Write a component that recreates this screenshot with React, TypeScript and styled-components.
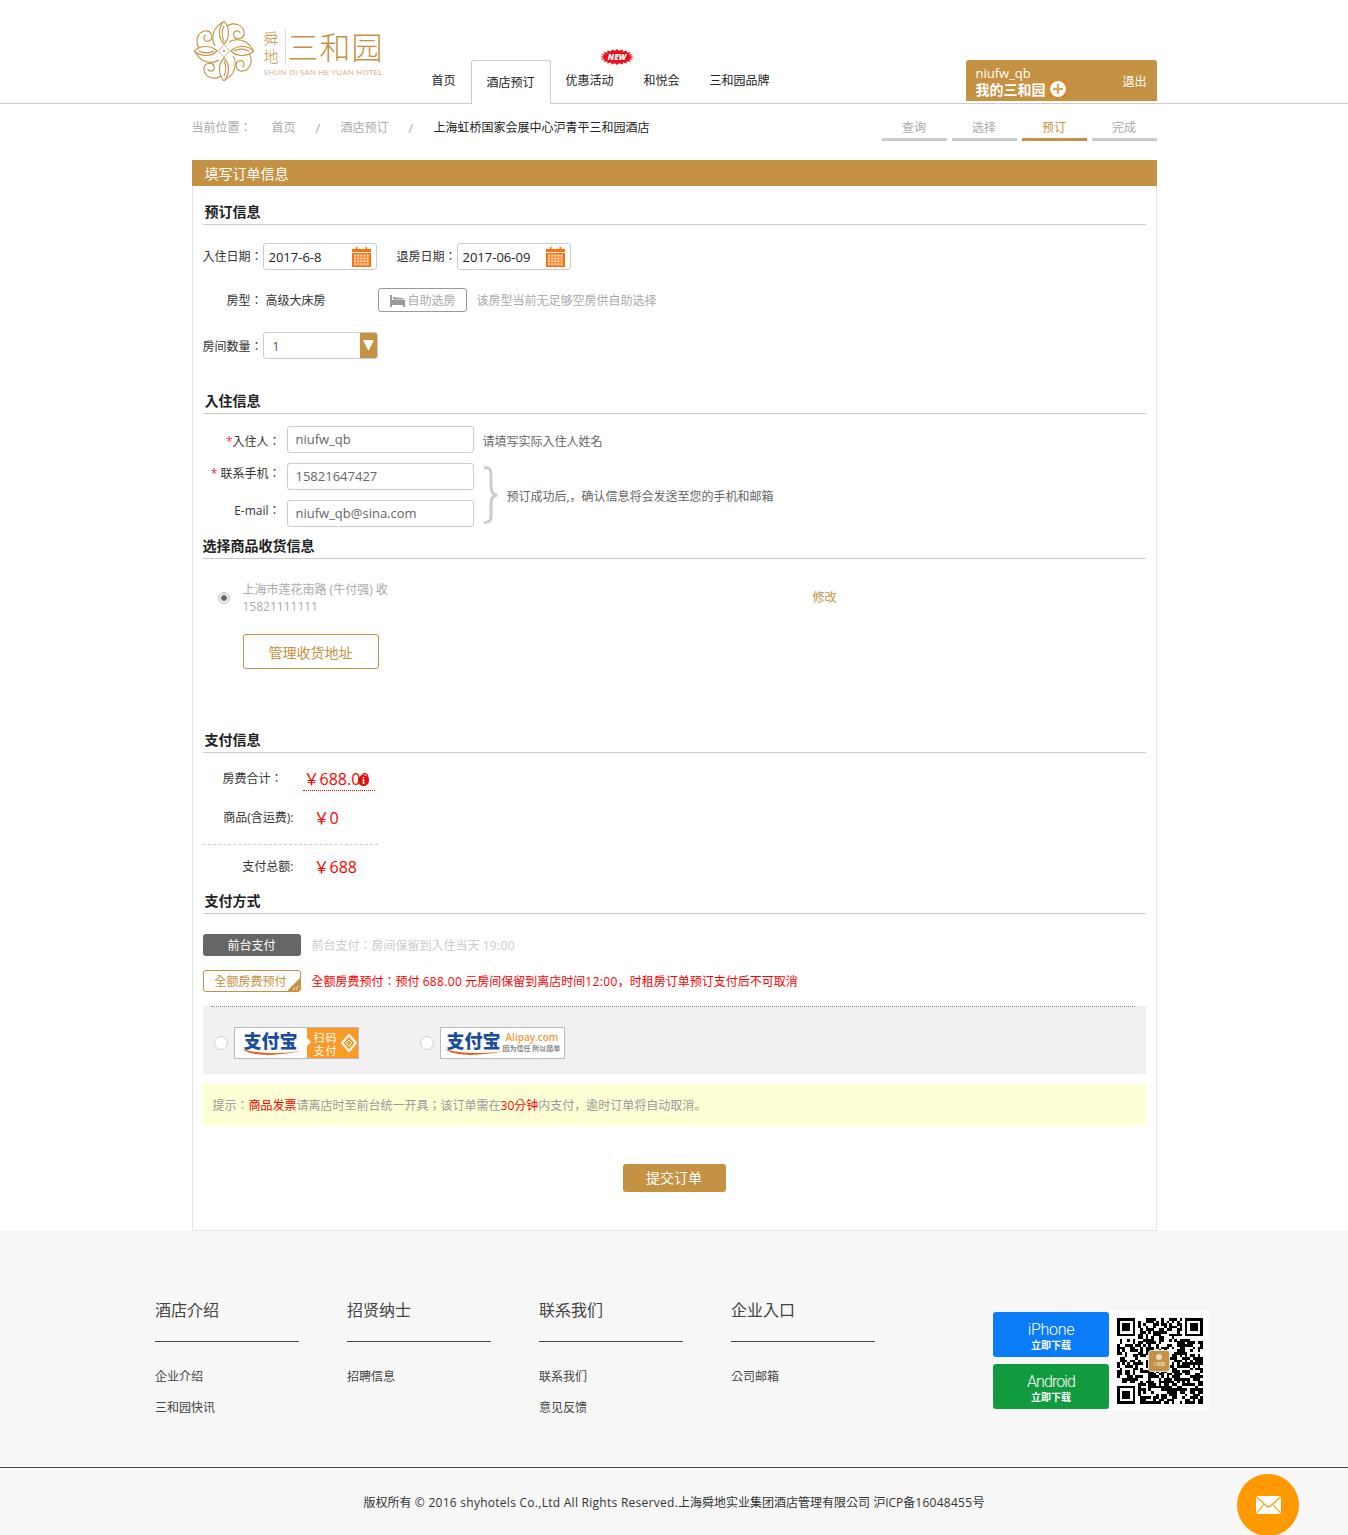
import React from "react";
import styled, { createGlobalStyle, css } from "styled-components";

const TAN = "#c59143";
const Global = createGlobalStyle`
  html, body { margin: 0; padding: 0; background: #fff; }
  body { font-family: "Open Sans", "Noto Sans CJK KR", "Noto Sans CJK SC", sans-serif; font-size: 12px; color: #333; line-height: 20px; overflow-x: hidden; }
  * { box-sizing: border-box; }
`;
const shift = (n?: number) => (n ? (n > 0 ? css`padding-top: ${n * 2}px;` : css`padding-bottom: ${-n * 2}px;`) : "");

const Page = styled.div`position: relative; width: 1348px; height: 1535px; overflow: hidden;`;

const Header = styled.header`height: 104px; border-bottom: 1px solid #ccc;`;
const HeaderInner = styled.div`width: 965px; margin: 0 auto; display: flex; height: 104px;`;
const LogoBox = styled.div`width: 225px; padding: 21px 0 0 2px; display: flex; align-items: flex-start;`;
const LogoWords = styled.div`margin: 8px 0 0 10px;`;
const LogoTop = styled.div`display: flex; height: 37px;`;
const LogoSide = styled.div`width: 15px; font-size: 15px; line-height: 18px; color: ${TAN}; font-weight: 300;`;
const LogoRule = styled.div`width: 1px; height: 36px; margin: 0 2px 0 6px; background: #ead9bd;`;
const LogoCn = styled.div`font-size: 31px; line-height: 36px; font-weight: 300; color: ${TAN}; letter-spacing: 1px; white-space: nowrap;`;
const LogoEn = styled.div`font-size: 8px; line-height: 12px; letter-spacing: 0.25px; color: #d3ae78; white-space: nowrap;`;
const Nav = styled.nav`display: flex; align-items: flex-start; padding-top: 60px;`;
const NavItem = styled.a`position: relative; display: block; padding: 1px 15px 0; height: 40px; line-height: 40px; color: #222; white-space: nowrap;`;
const NavActive = styled.a`display: block; width: 80px; height: 44px; line-height: 44px; text-align: center; border: 1px solid #ccc; border-bottom: 0; border-radius: 3px 3px 0 0; background: #fff; color: #222;`;
const NewBadge = styled.svg`position: absolute; left: 49px; top: -11px;`;
const UserBox = styled.div`margin-left: auto; margin-top: 60px; width: 191px; height: 41px; background: ${TAN}; border-radius: 3px 3px 0 0; padding: 2px 10px 0; color: #fff; display: flex; justify-content: space-between; align-items: center;`;
const UserName = styled.div`font-size: 13px; line-height: 15px;`;
const UserHome = styled.div`display: flex; align-items: center; gap: 4px; font-size: 14px; line-height: 17px; font-weight: 700;`;
const Plus = styled.svg`display: block;`;

const Crumbs = styled.div`width: 965px; height: 56px; margin: 0 auto; display: flex; justify-content: space-between; padding-top: 14px;`;
const CrumbList = styled.div`display: flex; gap: 20px; color: #aaa;`;
const CrumbLead = styled.span`width: 60px;`;
const CrumbSep = styled.span`width: 5px; font-size: 13px;`;
const CrumbNow = styled.span`color: #222;`;
const Steps = styled.div`display: flex; gap: 5px;`;
const Step = styled.div<{ $on?: boolean }>`width: 65px; text-align: center; height: 23px; color: ${p => (p.$on ? TAN : "#aaa")}; border-bottom: 3px solid ${p => (p.$on ? TAN : "#ccc")};`;

const Panel = styled.main`width: 965px; margin: 0 auto;`;
const PanelHead = styled.h1`margin: 0; height: 26px; line-height: 28px; background: ${TAN}; color: #fff; font-size: 14px; font-weight: 400; padding-left: 13px;`;
const PanelBody = styled.div`display: flow-root; border: 1px solid #e4e4e4; border-top: 0; padding: 0 10px 38px;`;

const Title = styled.h2<{ $top: number; $flush?: boolean }>`margin: ${p => p.$top}px 0 0; height: 25px; line-height: 24px; font-size: 14px; font-weight: 700; color: #222; border-bottom: 1px solid #ccc; padding-left: ${p => (p.$flush ? 0 : 2)}px;`;
const Row = styled.div<{ $top: number; $h?: number }>`display: flex; align-items: center; margin-top: ${p => p.$top}px; height: ${p => p.$h ?? 27}px;`;
const Label = styled.span<{ $w: number; $ml?: number; $dy?: number }>`width: ${p => p.$w}px; margin-left: ${p => p.$ml ?? 0}px; text-align: right; white-space: nowrap; color: #333; flex: none; ${p => shift(p.$dy)}`;
const Req = styled.i`color: #e33; font-style: normal;`;
const DateBox = styled.div`width: 114px; height: 27px; border: 1px solid #ccc; border-radius: 3px; display: flex; align-items: center; justify-content: space-between; padding: 0 5px 0 5px; font-size: 13px; color: #222;`;
const Plain = styled.span<{ $ml?: number; $dy?: number }>`margin-left: ${p => p.$ml ?? 0}px; white-space: nowrap; ${p => shift(p.$dy)}`;
const GhostBtn = styled.div`margin-left: 52px; width: 89px; height: 24px; border: 1px solid #999; border-radius: 3px; color: #aaa; display: flex; align-items: center; padding: 1px 0 0 11px; gap: 3px;`;
const Hint = styled.span<{ $ml: number; $c?: string; $dy?: number }>`margin-left: ${p => p.$ml}px; color: ${p => p.$c ?? "#aaa"}; white-space: nowrap; ${p => shift(p.$dy)}`;
const Num = styled.span`letter-spacing: 0.35px;`;
const SelectBox = styled.div`margin-left: 1px; width: 115px; height: 27px; border: 1px solid #ccc; border-radius: 3px; display: flex; justify-content: space-between; overflow: hidden;`;
const SelectVal = styled.span`padding-left: 9px; line-height: 27px; color: #555;`;
const SelectArrow = styled.span`width: 17px; background: ${TAN}; display: flex; align-items: center; justify-content: center;`;

const TextField = styled.div`width: 187px; height: 27px; border: 1px solid #ccc; border-radius: 3px; padding-left: 8px; line-height: 25px; font-size: 13px; color: #666; flex: none; margin-left: 6px;`;
const BraceGroup = styled.div`display: flex; align-items: center; margin-top: 10px;`;
const BraceFields = styled.div`display: flex; flex-direction: column; gap: 10px;`;
const FieldRow = styled.div`display: flex; align-items: center; height: 27px;`;
const BraceIcon = styled.svg`margin-left: 9px; flex: none;`;

const Address = styled.div`display: flex; margin-top: 22px; padding-left: 15px; height: 34px; align-items: center;`;
const Radio = styled.span<{ $on?: boolean; $size?: number }>`width: ${p => p.$size ?? 12}px; height: ${p => p.$size ?? 12}px; flex: none; border-radius: 50%; border: 1px solid #ccc; background: ${p => (p.$on ? "radial-gradient(circle, #666 0 2.5px, #e4e4e4 3px)" : "#fff")};`;
const AddrText = styled.div`margin-left: 13px; width: 570px; color: #aaa; line-height: 17px;`;
const Edit = styled.span`color: ${TAN};`;
const ManageBtn = styled.div`margin: 19px 0 0 40px; width: 136px; height: 35px; border: 1px solid ${TAN}; border-radius: 3px; color: ${TAN}; font-size: 14px; line-height: 35px; text-align: center;`;

const PayRow = styled.div<{ $top: number }>`display: flex; align-items: center; height: 24px; margin-top: ${p => p.$top}px;`;
const Money = styled.span<{ $dotted?: boolean; $ml: number }>`position: relative; margin-left: ${p => p.$ml}px; font-size: 16px; line-height: 24px; height: 24px; color: #f00; white-space: nowrap; ${p => p.$dotted && `width: 72px; padding-left: 1px; border-bottom: 1px dotted #f00;`}`;
const InfoDot = styled.svg`position: absolute; left: 55px; top: 8px;`;
const Dash = styled.div`width: 175px; margin-top: 14px; border-top: 1px dashed #ccc;`;

const PayTag = styled.div<{ $outline?: boolean }>`position: relative; width: 98px; height: 22px; flex: none; border-radius: 3px; text-align: center; line-height: 23px; overflow: hidden; ${p => p.$outline ? `border: 1px solid ${TAN}; color: ${TAN}; background: #fff; padding-right: 2px; line-height: 22px;` : `background: #666; color: #fff;`}`;
const Corner = styled.svg`position: absolute; right: -1px; bottom: -1px;`;
const Alipays = styled.div`margin-top: 14px; height: 68px; background: #f1f1f1;`;
const Dotted = styled.div`margin: 0 11px 0 8px; border-top: 1px dotted #888;`;
const AlipayRow = styled.div`display: flex; align-items: center; padding: 20px 0 0 11px;`;
const AliCard = styled.div<{ $gap?: number }>`position: relative; width: 125px; height: 32px; margin-left: 6px; margin-right: ${p => p.$gap ?? 0}px; display: flex; background: #fff; border: 1px solid #bbb; overflow: hidden;`;
const AliBrand = styled.div<{ $w: number; $pl: number }>`position: relative; width: ${p => p.$w}px; padding-left: ${p => p.$pl}px; font-size: 18px; line-height: 26px; font-weight: 900; color: #1c4c9c; white-space: nowrap; flex: none;`;
const Swoosh = styled.svg<{ $left: number }>`position: absolute; left: ${p => p.$left}px; top: 19px;`;
const AliScan = styled.div`position: relative; flex: 1; background: #fb9a26; color: #fff; font-size: 11px; letter-spacing: 1px; line-height: 13px; padding: 3px 0 0 7px; &::before { content: ""; position: absolute; left: 0; top: 10px; border: 4px solid transparent; border-left-color: #fff; }`;
const Diamond = styled.svg`position: absolute; right: 0; top: 0;`;
const AliSub = styled.div`flex: 1; display: flex; flex-direction: column; white-space: nowrap;`;
const AliDom = styled.span`color: #f79a3c; font-size: 10px; line-height: 12px; font-weight: 600; margin-top: 3px; margin-left: 3px;`;
const AliNote = styled.span`color: #888; font-size: 7px; line-height: 11px; font-weight: 700;`;
const Tip = styled.div`margin-top: 10px; height: 42px; line-height: 44px; background: #ffffd5; padding-left: 10px; color: #999;`;
const Red = styled.b`color: #f00; font-weight: 400;`;
const Submit = styled.div`margin: 38px auto 0; width: 103px; height: 28px; line-height: 28px; border-radius: 3px; text-align: center; background: ${TAN}; color: #fff; font-size: 14px;`;

const Footer = styled.footer`background: #f7f7f7; height: 304px;`;
const FooterMain = styled.div`height: 236px; display: flex; padding-left: 155px;`;
const FootCol = styled.div`width: 144px; margin-right: 48px; padding-top: 68px; flex: none;`;
const FootTitle = styled.div`height: 43px; line-height: 22px; font-size: 16px; color: #444; border-bottom: 1px solid #444;`;
const FootLinks = styled.div`margin-top: 19px; line-height: 31px; color: #444;`;
const Apps = styled.div`display: flex; margin-left: 70px; padding-top: 80px;`;
const AppCol = styled.div`display: flex; flex-direction: column; gap: 7px; padding-top: 1px;`;
const AppBtn = styled.div<{ $bg: string }>`width: 116px; height: 45px; border-radius: 3px; background: ${p => p.$bg}; color: #fff; text-align: center; padding-top: 9px;`;
const AppName = styled.div<{ $ls: number }>`font-size: 16px; line-height: 18px; font-family: Roboto, sans-serif; font-weight: 300; letter-spacing: ${p => p.$ls}px;`;
const AppSub = styled.div`font-size: 10px; line-height: 12px; font-weight: 700;`;
const Qr = styled.div`position: relative; width: 100px; height: 100px; background: #fff; padding: 7px 7px 0 8px;`;
const QrLogo = styled.div`position: absolute; left: 39px; top: 39px; width: 22px; height: 22px; background: ${TAN}; border: 1px solid #ddd; border-radius: 3px; color: #fff; font-size: 4px; line-height: 6px; text-align: center; padding-top: 11px; &::before { content: ""; position: absolute; left: 7px; top: 3px; width: 6px; height: 6px; border-radius: 50%; background: #ecd9b8; }`;
const Copy = styled.div`border-top: 1px solid #444; height: 68px; padding-top: 1px; line-height: 68px; text-align: center; color: #333; white-space: nowrap;`;
const CopyLatin = styled.span`letter-spacing: 0.27px;`;
const Mail = styled.div`position: absolute; left: 1237px; top: 1474px; width: 62px; height: 62px; border-radius: 50%; background: #ff9900; display: flex; align-items: center; justify-content: center;`;

const Calendar = () => (
  <svg width="19" height="20" viewBox="0 0 19 20">
    <rect x="0" y="2" width="19" height="18" fill="#ff6f0a" />
    <rect x="4" y="0" width="1.5" height="4" fill="#ff6f0a" />
    <rect x="13.5" y="0" width="1.5" height="4" fill="#ff6f0a" />
    <rect x="0" y="5" width="19" height="1" fill="#fff" />
    {[0, 1, 2, 3].map(r => [0, 1, 2, 3, 4].map(c => (
      <rect key={`${r}-${c}`} x={2 + c * 3.1} y={7.5 + r * 2.9} width="2.3" height="2.1" fill="#ffd9b8" />
    )))}
  </svg>
);

const Bed = () => (
  <svg width="15" height="12" viewBox="0 0 15 12">
    <path d="M0 0h2v5h13v7h-2v-2H2v2H0z" fill="#999" />
    <path d="M3 2l4 .5 7 1V4.500H3z" fill="#999" />
  </svg>
);

const star = (() => {
  const pts: string[] = [];
  const n = 20;
  for (let i = 0; i < n * 2; i++) {
    const a = (i / (n * 2)) * Math.PI * 2;
    const k = i % 2 ? 0.78 : 1;
    pts.push(`${(17 + Math.cos(a) * 17 * k).toFixed(1)},${(8 + Math.sin(a) * 8 * k).toFixed(1)}`);
  }
  return pts.join(" ");
})();

const Flower = () => (
  <svg width="60" height="60" viewBox="-30 -30 60 60" fill="none" stroke={TAN} strokeWidth="1.1">
    {[0, 90, 180, 270].map(r => (
      <g key={r} transform={`rotate(${r})`}>
        <path d="M0 -30C-6 -23 -6 -13 0 -7C6 -13 6 -23 0 -30Z" />
        <path d="M0 -25C-2.500 -20 -2.500 -15 0 -10" />
        <path d="M3 -25C9 -29 19 -27 20 -19C21 -12 12 -10 10 -15C8 -20 15 -22 16 -18" />
        <path d="M5 -9C9 -12 16 -12 22 -9C26 -6 28 -3 29 -1" />
      </g>
    ))}
    <circle r="1" fill={TAN} stroke="none" />
    <path d="M-6 0L0 -6L6 0L0 6Z" strokeWidth="0.6" />
  </svg>
);

const QrCode = () => {
  const n = 33;
  const cells: React.ReactNode[] = [];
  let s = 1234567;
  const finder = (x: number, y: number) =>
    (x < 8 && y < 8) || (x >= n - 8 && y < 8) || (x < 8 && y >= n - 8);
  for (let y = 0; y < n; y++) for (let x = 0; x < n; x++) {
    s = (s * 1103515245 + 12345) & 0x7fffffff;
    if (!finder(x, y) && (s >> 16) % 100 < 55) cells.push(<rect key={`${x}-${y}`} x={x} y={y} width="1.02" height="1.02" />);
  }
  const eye = (x: number, y: number) => (
    <g key={`e${x}${y}`}>
      <path d={`M${x} ${y}h7v7h-7zM${x + 1} ${y + 1}v5h5v-5z`} fillRule="evenodd" />
      <rect x={x + 2} y={y + 2} width="3" height="3" />
    </g>
  );
  return (
    <svg width="86" height="86" viewBox="0 0 33 33" fill="#000" shapeRendering="crispEdges">
      {cells}
      {eye(0, 0)}{eye(n - 7, 0)}{eye(0, n - 7)}
    </svg>
  );
};

const AliLogo = ({ w, pl }: { w: number; pl: number }) => (
  <AliBrand $w={w} $pl={pl}>
    支付宝
    <Swoosh $left={pl - 2} width="62" height="9" viewBox="0 0 62 9">
      <path d="M0 2C10 10 36 9 60 4C40 7 14 7 0 2Z" fill="#e8601c" />
    </Swoosh>
  </AliBrand>
);

export default function App() {
  return (
    <Page>
      <Global />
      <Header>
        <HeaderInner>
          <LogoBox>
            <Flower />
            <LogoWords>
              <LogoTop>
                <LogoSide>舜地</LogoSide>
                <LogoRule />
                <LogoCn>三和园</LogoCn>
              </LogoTop>
              <LogoEn>SHUN DI·SAN HE YUAN HOTEL</LogoEn>
            </LogoWords>
          </LogoBox>
          <Nav>
            <NavItem>首页</NavItem>
            <NavActive>酒店预订</NavActive>
            <NavItem>
              优惠活动
              <NewBadge width="34" height="16" viewBox="0 0 34 16">
                <polygon points={star} fill="#e8101c" />
                <text x="17" y="11" textAnchor="middle" fontSize="8" fontWeight="800" fontStyle="italic" fill="#fff" fontFamily="Open Sans">NEW</text>
              </NewBadge>
            </NavItem>
            <NavItem>和悦会</NavItem>
            <NavItem>三和园品牌</NavItem>
          </Nav>
          <UserBox>
            <div>
              <UserName>niufw_qb</UserName>
              <UserHome>
                我的三和园
                <Plus width="16" height="16" viewBox="0 0 16 16">
                  <rect width="16" height="16" fill="#e8730f" />
                  <circle cx="8" cy="8" r="8" fill="#fff" />
                  <path d="M8 3v10M3 8h10" stroke="#e8a050" strokeWidth="2.200" />
                </Plus>
              </UserHome>
            </div>
            <span>退出</span>
          </UserBox>
        </HeaderInner>
      </Header>

      <Crumbs>
        <CrumbList>
          <CrumbLead>当前位置：</CrumbLead>
          <span>首页</span>
          <CrumbSep>/</CrumbSep>
          <span>酒店预订</span>
          <CrumbSep>/</CrumbSep>
          <CrumbNow>上海虹桥国家会展中心沪青平三和园酒店</CrumbNow>
        </CrumbList>
        <Steps>
          <Step>查询</Step>
          <Step>选择</Step>
          <Step $on>预订</Step>
          <Step>完成</Step>
        </Steps>
      </Crumbs>

      <Panel>
        <PanelHead>填写订单信息</PanelHead>
        <PanelBody>
          <Title $top={14}>预订信息</Title>
          <Row $top={18}>
            <Label $w={60}>入住日期：</Label>
            <DateBox>2017-6-8<Calendar /></DateBox>
            <Label $w={60} $ml={20}>退房日期：</Label>
            <DateBox>2017-06-09<Calendar /></DateBox>
          </Row>
          <Row $top={18} $h={24}>
            <Label $w={60} $dy={1}>房型：</Label>
            <Plain $ml={3} $dy={1}>高级大床房</Plain>
            <GhostBtn><Bed />自助选房</GhostBtn>
            <Hint $ml={10} $dy={1}>该房型当前无足够空房供自助选择</Hint>
          </Row>
          <Row $top={20}>
            <Label $w={59} $dy={1}>房间数量：</Label>
            <SelectBox>
              <SelectVal>1</SelectVal>
              <SelectArrow>
                <svg width="11" height="11" viewBox="0 0 11 11"><path d="M0 0h11L5.500 11z" fill="#fff" /></svg>
              </SelectArrow>
            </SelectBox>
          </Row>

          <Title $top={30}>入住信息</Title>
          <Row $top={12}>
            <Label $w={78} $dy={2}><Req>*</Req>入住人：</Label>
            <TextField>niufw_qb</TextField>
            <Hint $ml={9} $c="#666" $dy={2}>请填写实际入住人姓名</Hint>
          </Row>
          <BraceGroup>
            <BraceFields>
              <FieldRow>
                <Label $w={78} $dy={-3}><Req>*</Req> 联系手机：</Label>
                <TextField>15821647427</TextField>
              </FieldRow>
              <FieldRow>
                <Label $w={78} $dy={-3}>E-mail：</Label>
                <TextField>niufw_qb@sina.com</TextField>
              </FieldRow>
            </BraceFields>
            <BraceIcon width="15" height="58" viewBox="0 0 15 58" fill="none" stroke="#ccc" strokeWidth="3">
              <path d="M1 1.500C9 1.500 8 6 8 14C8 24 8 28 14 29C8 30 8 34 8 44C8 52 9 56.500 1 56.500" />
            </BraceIcon>
            <Hint $ml={9} $c="#666" $dy={2}>预订成功后,，确认信息将会发送至您的手机和邮箱</Hint>
          </BraceGroup>

          <Title $top={7} $flush>选择商品收货信息</Title>
          <Address>
            <Radio $on />
            <AddrText>上海市莲花南路 (牛付强) 收<br />15821111111</AddrText>
            <Edit>修改</Edit>
          </Address>
          <ManageBtn>管理收货地址</ManageBtn>

          <Title $top={59}>支付信息</Title>
          <PayRow $top={14}>
            <Label $w={80}>房费合计：</Label>
            <Money $ml={20} $dotted>
              ￥688.00
              <InfoDot width="11" height="11" viewBox="0 0 11 11">
                <circle cx="5.500" cy="5.500" r="5.500" fill="#e01010" />
                <rect x="4.700" y="4" width="1.600" height="5" fill="#fff" />
                <rect x="4.700" y="2" width="1.600" height="1.400" fill="#fff" />
              </InfoDot>
            </Money>
          </PayRow>
          <PayRow $top={15}>
            <Label $w={91}>商品(含运费):</Label>
            <Money $ml={20}>￥0</Money>
          </PayRow>
          <Dash />
          <PayRow $top={10}>
            <Label $w={91}>支付总额:</Label>
            <Money $ml={20}>￥688</Money>
          </PayRow>

          <Title $top={10}>支付方式</Title>
          <Row $top={20} $h={22}>
            <PayTag>前台支付</PayTag>
            <Hint $ml={11} $c="#ccc" $dy={1}>前台支付：房间保留到入住当天 <Num>19:00</Num></Hint>
          </Row>
          <Row $top={14} $h={22}>
            <PayTag $outline>
              全额房费预付
              <Corner width="15" height="15" viewBox="0 0 15 15">
                <path d="M15 0V15H0Z" fill={TAN} />
                <path d="M7 13l2-3M10 13l2-4" stroke="#fff" strokeWidth="0.8" />
              </Corner>
            </PayTag>
            <Hint $ml={11} $c="#f00" $dy={1}>全额房费预付：预付 <Num>688.00</Num> 元房间保留到离店时间<Num>12:00</Num>，时租房订单预订支付后不可取消</Hint>
          </Row>
          <Alipays>
            <Dotted />
            <AlipayRow>
              <Radio $size={14} />
              <AliCard $gap={61}>
                <AliLogo w={72} pl={9} />
                <AliScan>
                  扫码<br />支付
                  <Diamond width="20" height="30" viewBox="0 0 20 30" fill="none" stroke="#fff" strokeWidth="2">
                    <path d="M11 7l7 8-7 8-7-8z" />
                    <path d="M11 12l3 3-3 3-3-3z" strokeWidth="1" />
                  </Diamond>
                </AliScan>
              </AliCard>
              <Radio $size={14} />
              <AliCard>
                <AliLogo w={62} pl={6} />
                <AliSub>
                  <AliDom>Alipay.com</AliDom>
                  <AliNote>因为信任 所以简单</AliNote>
                </AliSub>
              </AliCard>
            </AlipayRow>
          </Alipays>
          <Tip>提示：<Red>商品发票</Red>请离店时至前台统一开具；该订单需在<Red>30分钟</Red>内支付，逾时订单将自动取消。</Tip>
          <Submit>提交订单</Submit>
        </PanelBody>
      </Panel>

      <Footer>
        <FooterMain>
          <FootCol>
            <FootTitle>酒店介绍</FootTitle>
            <FootLinks>企业介绍<br />三和园快讯</FootLinks>
          </FootCol>
          <FootCol>
            <FootTitle>招贤纳士</FootTitle>
            <FootLinks>招聘信息</FootLinks>
          </FootCol>
          <FootCol>
            <FootTitle>联系我们</FootTitle>
            <FootLinks>联系我们<br />意见反馈</FootLinks>
          </FootCol>
          <FootCol>
            <FootTitle>企业入口</FootTitle>
            <FootLinks>公司邮箱</FootLinks>
          </FootCol>
          <Apps>
            <AppCol>
              <AppBtn $bg="#0a7cf7"><AppName $ls={-0.3}>iPhone</AppName><AppSub>立即下载</AppSub></AppBtn>
              <AppBtn $bg="#129a3f"><AppName $ls={-0.9}>Android</AppName><AppSub>立即下载</AppSub></AppBtn>
            </AppCol>
            <Qr>
              <QrCode />
              <QrLogo>三和园</QrLogo>
            </Qr>
          </Apps>
        </FooterMain>
        <Copy>版权所有 <CopyLatin>© 2016 shyhotels Co.,Ltd All Rights Reserved.</CopyLatin>上海舜地实业集团酒店管理有限公司 沪ICP备<CopyLatin>16048455</CopyLatin>号</Copy>
      </Footer>
      <Mail>
        <svg width="25" height="18" viewBox="0 0 25 18">
          <rect width="25" height="18" rx="2" fill="#fff" />
          <path d="M0.500 1l10 9c1.200 1 2.800 1 4 0l10-9M0.500 17l8-9M24.500 17l-8-9" fill="none" stroke="#ff9900" strokeWidth="1.100" />
        </svg>
      </Mail>
    </Page>
  );
}
